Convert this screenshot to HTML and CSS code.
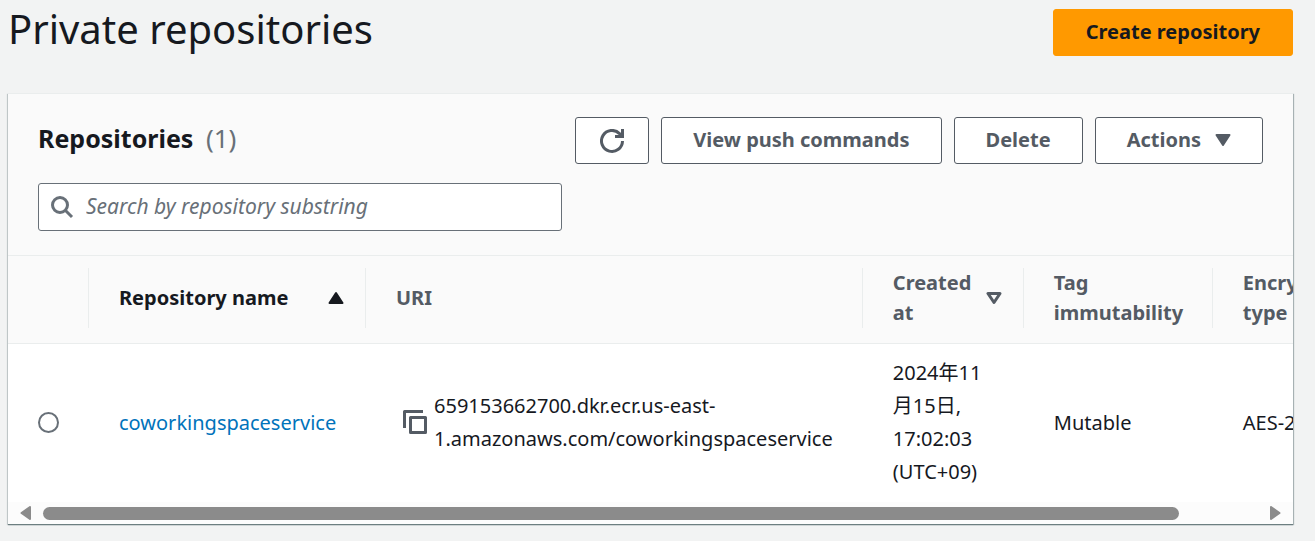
FILE: index.html
```html
<!DOCTYPE html>
<html lang="en">
<head>
<meta charset="utf-8">
<title>Private repositories</title>
<link rel="stylesheet" href="styles.css">
</head>
<body>
<main class="page">
  <header class="page-header">
    <h1 class="page-title">Private repositories</h1>
    <button class="button button-primary" type="button">Create repository</button>
  </header>
  <section class="panel">
    <div class="panel-header">
      <div class="panel-bar">
        <h2 class="panel-title">Repositories <span class="panel-count">(1)</span></h2>
        <div class="actions">
          <button class="button button-icon" type="button" aria-label="Refresh">
            <svg class="icon" viewBox="0 0 24 24" fill="none" stroke="currentColor" stroke-width="3"><path d="M22.500 12A10.500 10.500 0 1 1 19.500 4.600L22 7.500"/><path d="M22.500 0V7.500H15"/></svg>
          </button>
          <button class="button" type="button">View push commands</button>
          <button class="button" type="button">Delete</button>
          <button class="button button-menu" type="button">Actions
            <svg class="caret" viewBox="0 0 16 14"><path d="M1.500 2H14.500L8 12Z" fill="currentColor" stroke="currentColor" stroke-width="2" stroke-linejoin="round"/></svg>
          </button>
        </div>
      </div>
      <label class="search">
        <svg class="search-icon" viewBox="0 0 24 24" fill="none" stroke="currentColor" stroke-width="3"><circle cx="10" cy="10" r="7.500"/><path d="M15.500 15.500L22 22"/></svg>
        <input class="search-input" type="search" placeholder="Search by repository substring" aria-label="Search repositories">
      </label>
    </div>
    <div class="table-view">
      <table class="table">
        <colgroup><col class="col-select"><col class="col-name"><col><col class="col-created"><col class="col-tag"><col class="col-encryption"></colgroup>
        <thead>
          <tr>
            <th aria-label="Selection"><div class="head"></div></th>
            <th class="sorted"><div class="head">Repository name <svg class="caret" viewBox="0 0 16 14"><path d="M1.500 12H14.500L8 2Z" fill="currentColor" stroke="currentColor" stroke-width="2" stroke-linejoin="round"/></svg></div></th>
            <th><div class="head">URI</div></th>
            <th><div class="head">Created at <svg class="caret" viewBox="0 0 16 14"><path d="M2 2.500H14L8 11.500Z" fill="none" stroke="currentColor" stroke-width="3" stroke-linejoin="round"/></svg></div></th>
            <th><div class="head">Tag immutability</div></th>
            <th><div class="head">Encryption type</div></th>
          </tr>
        </thead>
        <tbody>
          <tr>
            <td class="select"><input class="radio" type="radio" name="repository" aria-label="coworkingspaceservice"></td>
            <td><a class="link" href="#">coworkingspaceservice</a></td>
            <td>
              <div class="uri">
                <button class="copy" type="button" aria-label="Copy URI"><svg class="icon" viewBox="0 0 24 24" fill="none" stroke="currentColor" stroke-width="3" stroke-linejoin="round"><path d="M1.500 18V1.500H20"/><rect x="7.500" y="7.500" width="15" height="15"/></svg></button>
                <span>659153662700.dkr.ecr.us-east-<wbr>1.amazonaws.com/coworkingspaceservice</span>
              </div>
            </td>
            <td>2024年11月15日, 17:02:03 (UTC+09)</td>
            <td>Mutable</td>
            <td>AES-256</td>
          </tr>
        </tbody>
      </table>
    </div>
    <div class="scrollbar">
      <svg class="scroll-arrow" viewBox="0 0 12 14"><path d="M10 1V13L1.500 7Z" fill="currentColor" stroke="currentColor" stroke-width="2" stroke-linejoin="round"/></svg>
      <div class="track"><div class="thumb"></div></div>
      <svg class="scroll-arrow" viewBox="0 0 12 14"><path d="M2 1V13L10.500 7Z" fill="currentColor" stroke="currentColor" stroke-width="2" stroke-linejoin="round"/></svg>
    </div>
  </section>
</main>
</body>
</html>
```
FILE: styles.css
```css
* {
  box-sizing: border-box;
}

body {
  margin: 0;
  background: #f2f3f3;
  color: #16191f;
  font-family: "Noto Sans", "Noto Sans CJK JP", sans-serif;
  font-size: 20px;
  line-height: 33px;
}

.page {
  padding: 9px 22px 16px 8px;
}

.page-header {
  display: flex;
  justify-content: space-between;
  align-items: flex-start;
  margin-bottom: 37px;
}

.page-title {
  margin: 0;
  font-size: 40px;
  font-weight: 400;
  line-height: 40px;
}

.button {
  display: flex;
  align-items: center;
  justify-content: center;
  height: 47px;
  padding: 0 31px 2px;
  border: 1px solid #545b64;
  border-radius: 3px;
  background: #fff;
  color: #545b64;
  font: inherit;
  font-weight: 700;
  white-space: nowrap;
}

.button-primary {
  padding: 0 32px 2px;
  border-color: #f90;
  background: #f90;
  color: #16191f;
}

.button-icon {
  padding: 0 24px;
}

.button-menu {
  gap: 14px;
}

.icon {
  display: block;
  width: 24px;
  height: 24px;
}

.caret {
  flex: none;
  width: 16px;
  height: 14px;
}

.panel {
  border-top: 1px solid #eaeded;
  background: #fafafa;
  box-shadow: 0 1px 1px #6c7e80, 1px 1px 1px #b4bcbd, -1px 1px 1px #d0d5d5;
}

.panel-header {
  padding: 23px 30px 24px;
  border-bottom: 1px solid #eaeded;
}

.panel-bar {
  display: flex;
  justify-content: space-between;
  margin-bottom: 19px;
}

.panel-title {
  margin: 0;
  font-size: 25px;
  line-height: 42px;
}

.panel-count {
  margin-left: 6px;
  color: #687078;
  font-size: 26px;
  font-weight: 400;
}

.actions {
  display: flex;
  gap: 12px;
}

.search {
  display: flex;
  align-items: center;
  gap: 12px;
  width: 42.8%;
  height: 48px;
  padding: 0 12px 0 11px;
  border: 1px solid #687078;
  border-radius: 3px;
  background: #fff;
}

.search-icon {
  flex: none;
  width: 24px;
  height: 24px;
  color: #687078;
}

.search-input {
  flex: 1;
  min-width: 0;
  padding: 0 0 2px;
  border: 0;
  outline: 0;
  background: none;
  font: inherit;
  font-size: 21px;
}

.search-input::placeholder {
  color: #687078;
  font-style: italic;
}

.table-view {
  overflow: hidden;
}

.table {
  width: 107.3%;
  border-spacing: 0;
  table-layout: fixed;
}

.col-select { width: 81px; }
.col-name { width: 277px; }
.col-created { width: 161px; }
.col-tag { width: 189px; }
.col-encryption { width: 174px; }

th {
  padding: 12px 0 15px;
  border-bottom: 1px solid #eaeded;
  color: #545b64;
  line-height: 30px;
  text-align: left;
}

.head {
  display: flex;
  align-items: center;
  justify-content: space-between;
  min-height: 60px;
  padding: 0 21px 0 30px;
  border-right: 1px solid #eaeded;
}

.sorted {
  color: #16191f;
}

td {
  padding: 12px 29px 14px 30px;
  background: #fff;
}

.select {
  padding-right: 0;
}

.radio {
  display: block;
  width: 21px;
  height: 21px;
  margin: 0;
  border: 2px solid #687078;
  border-radius: 50%;
  appearance: none;
  background: #fff;
}

.link {
  color: #0073bb;
  text-decoration: none;
}

.uri {
  display: flex;
  align-items: center;
  gap: 7px;
  padding-left: 7px;
}

.copy {
  flex: none;
  padding: 0;
  border: 0;
  background: none;
  color: #545b64;
}

.scrollbar {
  display: flex;
  align-items: center;
  gap: 11px;
  height: 22px;
  padding: 0 12px;
  background: #fcfcfc;
  color: #8b8b8b;
}

.scroll-arrow {
  flex: none;
  width: 12px;
  height: 14px;
}

.track {
  flex: 1;
}

.thumb {
  width: 93.5%;
  height: 13px;
  border-radius: 7px;
  background: #8b8b8b;
}
```
